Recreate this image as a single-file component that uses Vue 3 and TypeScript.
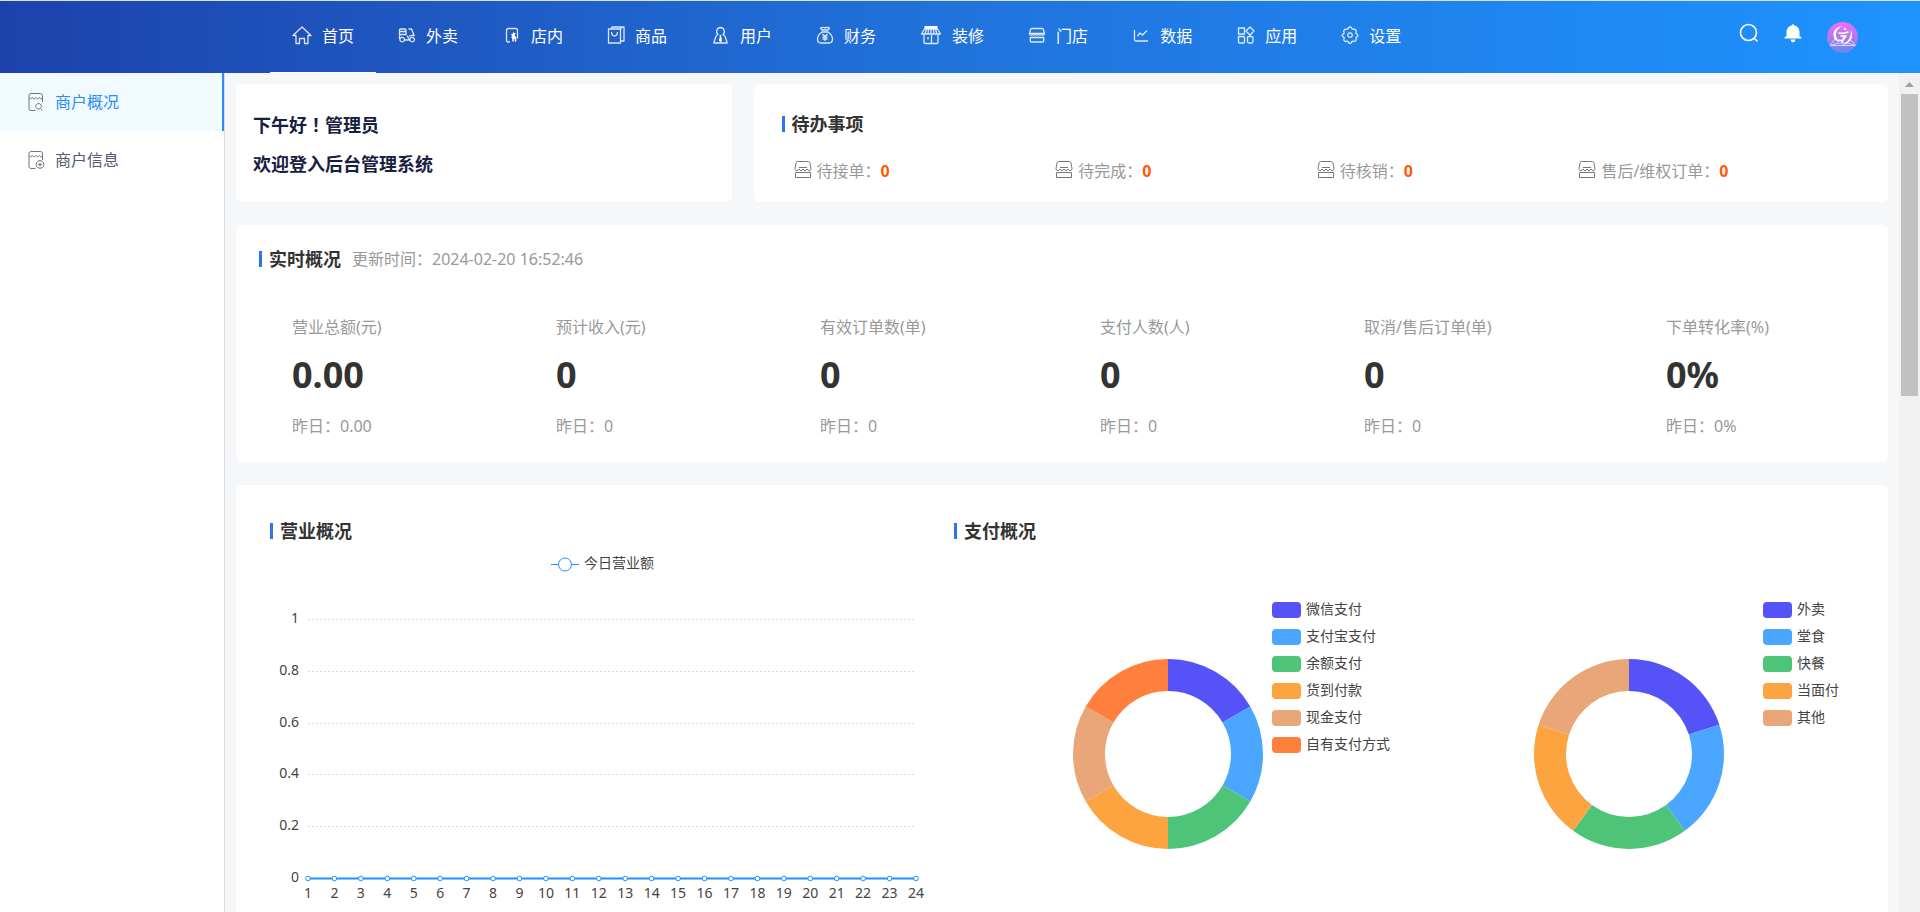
<script setup lang="ts">
interface Shape { d: string; fill?: boolean }
interface NavItem { label: string; width: number; shapes: Shape[] }
interface Slice { label: string; color: string }

const nav: NavItem[] = [
  { label: '首页', width: 20, shapes: [{ d: 'M1 10.500 10 2l9 8.500h-3v8h-3.500V13.500h-5v5H4v-8Z' }] },
  { label: '外卖', width: 18, shapes: [
    { d: 'M2.500 4h4.500q1 0 1 1v4.500h-6.500V5q0-1 1-1ZM1.500 6.500h6.500M2 9.500q-1 2.500-.300 4.500M6.500 15h5L9 10.500M10.500 4h3l2.800 7' },
    { d: 'M4.200 12.300a2.300 2.300 0 1 0 .010 0ZM14.200 12.300a2.300 2.300 0 1 0 .010 0ZM11 11.500q2-1.500 5-1' },
  ] },
  { label: '店内', width: 19, shapes: [
    { d: 'M8 17H6.500q-2 0-2-2V5.500q0-2 2-2h7q2 0 2 2v8' },
    { d: 'm11.500 6.500.7 1.500 1.800.2-1.300 1.200.3 1.400 1.300 1.500V16.500h-1.600v-2.500h-1v2.500h-1.500V13l-1-.800.8-1.500-1-1.600 1.800-.3Z', fill: true },
  ] },
  { label: '商品', width: 18, shapes: [
    { d: 'M1.500 4h12v14h-12ZM4 4l1-2h12v14h-3.500M13.500 4l1.500-2' },
    { d: 'M4.500 7q.3 4 3 4t3-4' },
  ] },
  { label: '用户', width: 19, shapes: [
    { d: 'M9.500 2.500a4 4 0 0 1 2.500 7c1 .5 1.700 1.200 2.200 2.200l2 6.300H2.800l2-6.300c.5-1 1.200-1.700 2.200-2.200a4 4 0 0 1 2.500-7Z' },
    { d: 'M8.500 10h2l-.4 1.500 1 4-1.600 2-1.600-2 1-4Z', fill: true },
  ] },
  { label: '财务', width: 18, shapes: [
    { d: 'M6 5 4.500 3q2-1 3-.5t3 0 3 .5L12 5ZM6 7q-4.500 3-4.500 7Q1.500 18 5 18h8q3.500 0 3.500-4Q16.500 10 12 7Z' },
    { d: 'M6.500 9 9 11.500 11.500 9M6.500 12h5M6.500 14h5M9 11.500V16' },
  ] },
  { label: '装修', width: 22, shapes: [
    { d: 'M4 9.500v8q0 1 1 1h12q1 0 1-1v-8' },
    { d: 'M4.500 1h13v3h-13Z', fill: true },
    { d: 'M4.500 4h13l3 5H1.500ZM5 9q1-3 1.500-5M8 9l.5-5M11 9V4M14 9l-.500-5M17 9q-1-3-1.500-5M11.500 10v8M8 12v2.500' },
  ] },
  { label: '门店', width: 18, shapes: [{ d: 'M4 3.500h10q1.300 0 1.600 1.300l.9 4.200q-1.500 2.400-3 0-1.500 2.400-3 0-1.500 2.400-3 0-1.500 2.400-3 0-1.500 2.400-3 0l.9-4.200Q2.700 3.500 4 3.500ZM2.300 12.500V16q0 1 1 1h11.400q1 0 1-1v-3.500ZM2 8.300h14' }] },
  { label: '数据', width: 18, shapes: [{ d: 'M2.500 5v9.500q0 1.500 1.500 1.500H16M5.500 11l2.500-3 2.500 2L15 5.500' }] },
  { label: '应用', width: 19, shapes: [{ d: 'M2.500 3h6v6h-6ZM2.500 11.500h5q1 0 1 1V17q0 1-1 1h-4q-1 0-1-1ZM12.500 11.500h3q1.500 0 1.500 1.500v3.500q0 1.500-1.500 1.500h-2.500q-1.500 0-1.500-1.500v-4q0-1 1-1ZM14 2l4 4-4 4-4-4Z' }] },
  { label: '设置', width: 18, shapes: [
    { d: 'M9 2q1.600 0 1.900 1.700.7.300 1.200.7 1.700-.700 2.700.6t.1 2.700q.2.500.3 1.200 1.700.3 1.700 1.600t-1.700 1.700l-.4 1.100q1 1.500-.1 2.600t-2.600.1l-1.200.6Q10.600 18.300 9 18.300t-1.900-1.700l-1.200-.6q-1.500 1-2.600-.1t-.1-2.600l-.4-1.100Q1.100 11.800 1.100 10.500T2.800 8.900l.3-1.200Q2.200 6.300 3.200 5t2.700-.6q.5-.4 1.200-.7Q7.400 2 9 2Z' },
    { d: 'M9 7.800a2.300 2.300 0 1 0 .010 0Z' },
  ] },
]

const sideMenu = [
  { label: '商户概况', active: true, badge: 'M11.500 11.500a2.800 2.800 0 1 0 .010 0ZM13.500 16.500l2 2' },
  { label: '商户信息', active: false, badge: 'M13 10.500a3.900 3.900 0 1 0 .010 0ZM13 12.500v4M11 14.500h4' },
]

const todos = ['待接单', '待完成', '待核销', '售后/维权订单']

const stats = [
  { label: '营业总额(元)', value: '0.00' },
  { label: '预计收入(元)', value: '0' },
  { label: '有效订单数(单)', value: '0' },
  { label: '支付人数(人)', value: '0' },
  { label: '取消/售后订单(单)', value: '0' },
  { label: '下单转化率(%)', value: '0%' },
]

const ticks = ['1', '0.8', '0.6', '0.4', '0.2', '0'].map((label, i) => ({ label, y: 76 + Math.round(i * 51.8) }))
const hours = Array.from({ length: 24 }, (_, i) => ({ label: i + 1, x: 38 + (i * 608) / 23 }))

function ring(slices: Slice[], cx: number, cy: number) {
  const outer = 95
  const inner = 63
  const at = (r: number, a: number) => `${(cx + r * Math.sin(a)).toFixed(2)} ${(cy - r * Math.cos(a)).toFixed(2)}`
  return slices.map((s, i) => {
    const a = (i / slices.length) * Math.PI * 2
    const b = ((i + 1) / slices.length) * Math.PI * 2
    return { color: s.color, d: `M${at(outer, a)}A${outer} ${outer} 0 0 1 ${at(outer, b)}L${at(inner, b)}A${inner} ${inner} 0 0 0 ${at(inner, a)}Z` }
  })
}

const payMethods: Slice[] = [
  { label: '微信支付', color: '#5553f7' },
  { label: '支付宝支付', color: '#4ba6ff' },
  { label: '余额支付', color: '#4ec478' },
  { label: '货到付款', color: '#fba440' },
  { label: '现金支付', color: '#e9a678' },
  { label: '自有支付方式', color: '#ff7f3c' },
]
const payScenes: Slice[] = [
  { label: '外卖', color: '#5553f7' },
  { label: '堂食', color: '#4ba6ff' },
  { label: '快餐', color: '#4ec478' },
  { label: '当面付', color: '#fba440' },
  { label: '其他', color: '#e9a678' },
]
const pies = [
  { name: '支付方式', slices: payMethods, arcs: ring(payMethods, 214, 211), legendX: 318 },
  { name: '支付场景', slices: payScenes, arcs: ring(payScenes, 214, 211), legendX: 348 },
]
</script>

<template>
  <div class="shell">
    <header class="topbar">
      <nav class="nav">
        <a v-for="(n, i) in nav" :key="n.label" href="#" class="nav-item" :class="{ active: i === 0 }">
          <svg class="nav-icon" :width="n.width" height="20" :viewBox="`0 0 ${n.width} 20`" aria-hidden="true">
            <path v-for="s in n.shapes" :key="s.d" :d="s.d" :class="s.fill ? 'solid' : 'line'" />
          </svg>
          <span>{{ n.label }}</span>
        </a>
      </nav>
      <div class="tools">
        <button type="button" class="tool" aria-label="搜索">
          <svg width="20" height="20" viewBox="0 0 20 20"><circle cx="9.500" cy="9.500" r="8" class="bold-line" /><path d="m15.500 15.500 3 3" class="bold-line" /></svg>
        </button>
        <button type="button" class="tool" aria-label="通知">
          <svg width="20" height="20" viewBox="0 0 20 20"><path d="M9.200 1.200h1.600v1q5.200 1 5.700 6.300V13l2 1.500V15.500H1.500V14.500l2-1.500V8.500Q4 3.200 9.200 2.200ZM7.500 16.500h5q-.5 2.700-2.500 2.700t-2.500-2.700Z" class="solid" /></svg>
        </button>
        <button type="button" class="avatar" aria-label="账户">
          <svg width="31" height="31" viewBox="0 0 31 31">
            <defs><linearGradient id="avatarFill" x1="0" y1="0" x2="0" y2="1"><stop offset="0" stop-color="#f56cf3" /><stop offset="1" stop-color="#6488f3" /></linearGradient></defs>
            <circle cx="15.500" cy="15.500" r="15.500" fill="url(#avatarFill)" />
            <path d="M15 4Q6 6 6.500 13q.5 6 6 7-4-4-3.500-8 .5-5 6-8ZM24 8q4 9-4.500 14l-4 1q9-5 8.500-15Z" fill="#fff" />
            <path d="M12 11q5 1 9-1M14 14h5q-3 6-7 4M17 15l-2 6M17.500 6.500l1 1" stroke="#fff" stroke-width="1.600" fill="none" stroke-linecap="round" />
            <path d="M8 17 3 23.500h25.500L24 18M5 23q11-5 23 .5" stroke="#ded4ff" stroke-width="1" fill="none" />
          </svg>
        </button>
      </div>
    </header>

    <div class="body">
      <aside class="sidebar">
        <a v-for="m in sideMenu" :key="m.label" href="#" class="side-item" :class="{ active: m.active }">
          <svg width="18" height="20" viewBox="0 0 18 20" aria-hidden="true">
            <path class="side-line" d="M8.500 18.500H4q-2 0-2-2v-13q0-2 2-2h9.500q2 0 2 2V10M2 5.500l1.500 1.500 1.800-1.500L7 7l1.800-1.500L10.500 7l1.700-1.500L13.800 7l1.700-1.500" />
            <path class="side-line" :d="m.badge" />
          </svg>
          <span>{{ m.label }}</span>
        </a>
      </aside>

      <main class="main">
        <div class="row">
          <section class="card greeting">
            <p>下午好<span class="mark">！</span>管理员</p>
            <p>欢迎登入后台管理系统</p>
          </section>
          <section class="card todo">
            <h2 class="title">待办事项</h2>
            <ul class="todo-list">
              <li v-for="t in todos" :key="t">
                <svg width="18" height="18" viewBox="0 0 18 18" aria-hidden="true">
                  <path class="todo-line" d="M3.500.5h11q1 0 1.300 1l1.200 6q0 2-2 2.500l-2-2-2 2-2-2-2 2-2-2-2 2q-2-.500-2-2.500l1.200-6q.3-1 1.300-1ZM1.500 11.500h15v5h-15ZM5 6.500h8" />
                </svg>
                <span>{{ t }}：</span><strong>0</strong>
              </li>
            </ul>
          </section>
        </div>

        <section class="card realtime">
          <div class="heading">
            <h2 class="title">实时概况</h2>
            <span class="updated">更新时间：2024-02-20 16:52:46</span>
          </div>
          <div class="stats">
            <div v-for="s in stats" :key="s.label" class="stat">
              <span>{{ s.label }}</span>
              <strong>{{ s.value }}</strong>
              <span>昨日：{{ s.value }}</span>
            </div>
          </div>
        </section>

        <section class="card charts">
          <div class="turnover">
            <h2 class="title">营业概况</h2>
            <svg class="chart" viewBox="0 0 664 384" role="img" aria-label="今日营业额">
              <path d="M281 21.500h28" class="series-thin" />
              <circle cx="295" cy="21.500" r="6.500" class="series-dot" />
              <text x="314" y="25">今日营业额</text>
              <g v-for="t in ticks" :key="t.label">
                <path v-if="t.label !== '0'" :d="`M38 ${t.y}.5H646`" class="grid-line" />
                <text x="29" :y="t.y + 4" text-anchor="end">{{ t.label }}</text>
              </g>
              <path d="M38 335.500H646" class="series" />
              <g v-for="h in hours" :key="h.label">
                <circle :cx="h.x" cy="335.500" r="2.300" class="series-dot" />
                <text :x="h.x" y="355" text-anchor="middle">{{ h.label }}</text>
              </g>
            </svg>
          </div>
          <div class="payments">
            <h2 class="title">支付概况</h2>
            <div class="pies">
              <svg v-for="p in pies" :key="p.name" class="chart" viewBox="0 0 461 384" role="img" :aria-label="p.name">
                <path v-for="a in p.arcs" :key="a.color" :d="a.d" :fill="a.color" />
                <g v-for="(s, i) in p.slices" :key="s.label">
                  <rect :x="p.legendX" :y="59 + i * 27" width="29" height="16" rx="4" :fill="s.color" />
                  <text :x="p.legendX + 34" :y="71 + i * 27">{{ s.label }}</text>
                </g>
              </svg>
            </div>
          </div>
        </section>
      </main>

      <div class="scrollbar" aria-hidden="true">
        <svg width="17" height="21" viewBox="0 0 17 21"><path d="M4 14 8.500 9l4.500 5Z" fill="#a3a3a3" /></svg>
        <div class="thumb"></div>
      </div>
    </div>
  </div>
</template>

<style>
body {
  margin: 0;
}
</style>

<style scoped>
.shell {
  display: flex;
  flex-direction: column;
  height: 100vh;
  overflow: hidden;
  background: #f6f7f9;
  color: #333;
  font-family: "Noto Sans", "Noto Sans CJK SC", sans-serif;
  font-size: 16px;
  line-height: 24px;
}
.topbar {
  display: flex;
  flex: none;
  align-items: stretch;
  justify-content: space-between;
  height: 72px;
  padding: 0 62px 0 270px;
  border-top: 1px solid #dce3e6;
  background: linear-gradient(90deg, #1d42ab, #2173dc, #1e93ff);
}
.nav {
  display: flex;
}
.nav-item {
  display: flex;
  align-items: center;
  gap: 10px;
  padding: 0 22px 2px;
  border-bottom: 1px solid transparent;
  color: #fff;
  text-decoration: none;
  white-space: nowrap;
}
.nav-item.active {
  border-bottom-color: #fff;
}
.nav-icon {
  flex: none;
  margin-bottom: 2px;
}
.line {
  fill: none;
  stroke: #fff;
  stroke-opacity: 0.85;
  stroke-width: 1.3;
  stroke-linejoin: round;
}
.solid {
  fill: #fff;
}
.bold-line {
  fill: none;
  stroke: #fff;
  stroke-width: 1.6;
}
.tools {
  display: flex;
  align-items: center;
  gap: 24px;
}
.tool,
.avatar {
  display: flex;
  padding: 0;
  border: 0;
  background: none;
}
.tool {
  margin-bottom: 8px;
}
.body {
  display: flex;
  flex: 1;
  min-height: 0;
}
.sidebar {
  flex: none;
  width: 224px;
  border-right: 1px solid #d9dce0;
  background: #fff;
}
.side-item {
  display: flex;
  align-items: center;
  gap: 10px;
  height: 58px;
  padding-left: 27px;
  color: #515a6e;
  text-decoration: none;
}
.side-item.active {
  border-right: 2px solid #2d8cf0;
  background: #f0faff;
  color: #2d8cf0;
}
.side-line,
.todo-line {
  fill: none;
  stroke: #777;
  stroke-width: 1;
}
.main {
  display: flex;
  flex: 1;
  flex-direction: column;
  gap: 23px;
  min-width: 0;
  padding: 11px;
  overflow-y: auto;
  scrollbar-width: none;
}
.row {
  display: grid;
  flex: none;
  grid-template-columns: 30% 1fr;
  gap: 22px;
}
.card {
  flex: none;
  border-radius: 6px;
  background: #fff;
}
.greeting {
  display: flex;
  flex-direction: column;
  justify-content: center;
  gap: 15px;
  padding: 2px 17px 0;
  color: #17203f;
  font-size: 18px;
  font-weight: 700;
}
.greeting p {
  margin: 0;
}
.mark {
  font-family: "Noto Sans CJK TC", sans-serif;
}
.title {
  display: flex;
  align-items: center;
  gap: 7px;
  margin: 0;
  font-size: 18px;
  font-weight: 700;
  line-height: 24px;
}
.title::before {
  width: 3px;
  height: 16px;
  background: #2d73ee;
  content: "";
}
.todo {
  padding: 28px 28px 19px;
}
.todo-list {
  display: grid;
  grid-template-columns: repeat(4, 1fr);
  margin: 0;
  padding: 23px 20px 0 12px;
  color: #999;
  list-style: none;
}
.todo-list li {
  display: flex;
  align-items: center;
  white-space: nowrap;
}
.todo-list svg {
  margin: 0 5px 2px 0;
}
.todo-list strong {
  color: #ff5a0a;
}
.realtime {
  padding: 22px 23px 24px;
}
.heading {
  display: flex;
  gap: 11px;
}
.updated,
.stat span {
  color: #999;
}
.stats {
  display: flex;
  justify-content: space-between;
  padding: 44px 96px 0 33px;
}
.stat {
  display: flex;
  flex-direction: column;
  white-space: nowrap;
}
.stat strong {
  margin: 12px 0 15px;
  font-size: 36px;
  line-height: 48px;
}
.charts {
  display: grid;
  grid-template-columns: 684fr 922fr;
  padding: 34px 12px 34px 34px;
}
.turnover {
  padding-right: 20px;
}
.pies {
  display: grid;
  grid-template-columns: 1fr 1fr;
}
.chart {
  display: block;
  width: 100%;
}
.chart text {
  fill: #444;
  font-size: 14px;
}
.grid-line {
  stroke: #dcdcdc;
  stroke-dasharray: 2 2;
}
.series,
.series-thin {
  fill: none;
  stroke: #1e90ff;
  stroke-width: 2;
}
.series-thin {
  stroke-width: 1;
}
.series-dot {
  fill: #fff;
  stroke: #1e90ff;
}
.scrollbar {
  flex: none;
  width: 17px;
  padding: 0 2px;
  background: #f1f1f1;
}
.scrollbar svg {
  display: block;
}
.thumb {
  height: 36%;
  background: #c1c1c1;
}
</style>
